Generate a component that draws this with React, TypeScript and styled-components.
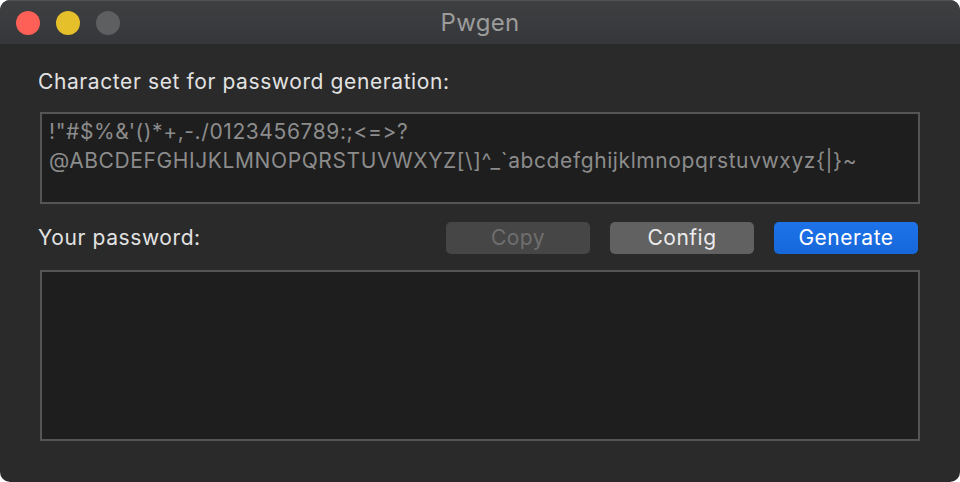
import styled, { createGlobalStyle } from 'styled-components';

const CHARSET =
  '!"#$%&\'()*+,-./0123456789:;<=>?@ABCDEFGHIJKLMNOPQRSTUVWXYZ[\\]^_`abcdefghijklmnopqrstuvwxyz{|}~';

const GlobalStyle = createGlobalStyle`
  html, body {
    margin: 0;
    padding: 0;
    background: #ffffff;
  }
  body {
    font-family: Inter, "Liberation Sans", Arial, sans-serif;
  }
`;

type ButtonKind = 'disabled' | 'normal' | 'primary';

export default function App() {
  return (
    <>
      <GlobalStyle />
      <S.Window>
        <S.TitleBar>
          <S.Lights>
            <S.Light color="#fe5f57" />
            <S.Light color="#e6c02a" />
            <S.Light color="#5e5f61" />
          </S.Lights>
          <S.Title>Pwgen</S.Title>
        </S.TitleBar>
        <S.Content>
          <S.Label>Character set for password generation:</S.Label>
          <S.CharsetBox>
            {CHARSET.slice(0, 31)}
            <br />
            {CHARSET.slice(31)}
          </S.CharsetBox>
          <S.Row>
            <S.Label>Your password:</S.Label>
            <S.Buttons>
              <S.Button kind="disabled">Copy</S.Button>
              <S.Button kind="normal">Config</S.Button>
              <S.Button kind="primary">Generate</S.Button>
            </S.Buttons>
          </S.Row>
          <S.OutputBox />
        </S.Content>
      </S.Window>
    </>
  );
}

const buttonColors: Record<ButtonKind, { bg: string; fg: string }> = {
  disabled: { bg: '#464646', fg: '#6f6f6f' },
  normal: { bg: '#616161', fg: '#ececec' },
  primary: { bg: 'linear-gradient(#1e73ea, #1667d9)', fg: '#ffffff' },
};

const S = {
  Window: styled.div`
    width: 960px;
    height: 482px;
    border-radius: 10px;
    overflow: hidden;
    background: #2a2a2a;
    display: flex;
    flex-direction: column;
  `,
  TitleBar: styled.div`
    height: 44px;
    flex-shrink: 0;
    display: flex;
    align-items: center;
    position: relative;
    background: linear-gradient(#3e3f41, #36373a);
    border-top: 1px solid #505153;
    box-sizing: border-box;
  `,
  Lights: styled.div`
    display: flex;
    gap: 16px;
    padding-left: 16px;
  `,
  Light: styled.div<{ color: string }>`
    width: 24px;
    height: 24px;
    border-radius: 50%;
    background: ${({ color }) => color};
  `,
  Title: styled.div`
    position: absolute;
    left: 0;
    right: 0;
    text-align: center;
    font-size: 24px;
    letter-spacing: 0.3px;
    color: #9c9c9c;
    pointer-events: none;
  `,
  Content: styled.div`
    display: flex;
    flex-direction: column;
    padding: 26px 40px 0 40px;
  `,
  Label: styled.div`
    margin-left: -2px;
    font-size: 21px;
    letter-spacing: 0.6px;
    line-height: 24px;
    color: #e2e2e2;
  `,
  CharsetBox: styled.div`
    margin-top: 18px;
    height: 92px;
    box-sizing: border-box;
    border: 2px solid #555555;
    background: #1e1e1e;
    padding: 3px 7px;
    font-size: 21px;
    letter-spacing: 0.6px;
    line-height: 29px;
    color: #8c8c8c;
  `,
  Row: styled.div`
    margin-top: 17px;
    height: 33px;
    display: flex;
    align-items: center;
    justify-content: space-between;
  `,
  Buttons: styled.div`
    display: flex;
    gap: 20px;
    margin-right: 2px;
  `,
  Button: styled.div<{ kind: ButtonKind }>`
    width: 144px;
    height: 32px;
    border-radius: 5px;
    display: flex;
    align-items: center;
    justify-content: center;
    font-size: 21px;
    letter-spacing: 0.5px;
    background: ${({ kind }) => buttonColors[kind].bg};
    color: ${({ kind }) => buttonColors[kind].fg};
  `,
  OutputBox: styled.div`
    margin-top: 16px;
    height: 171px;
    box-sizing: border-box;
    border: 2px solid #555555;
    background: #1e1e1e;
  `,
};
